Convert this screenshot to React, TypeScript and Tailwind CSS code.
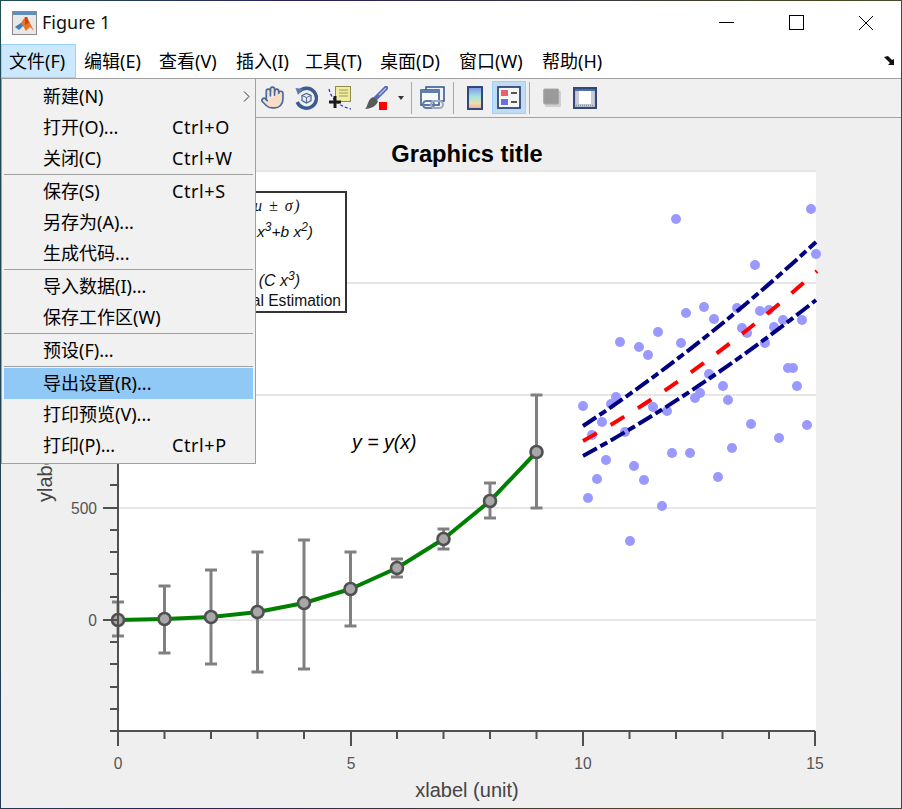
import { Hand } from "lucide-react";

const uiFont = "font-['Noto_Sans','Noto_Sans_CJK_SC',sans-serif]";

const menuBar = [
  { label: "文件(F)", cls: "w-[75px] pl-[7px] bg-[#cce8ff] border border-[#99d1ff]" },
  { label: "编辑(E)", cls: "w-[75px] pl-[8px]" },
  { label: "查看(V)", cls: "w-[77px] pl-[8px]" },
  { label: "插入(I)", cls: "w-[69px] pl-[8px]" },
  { label: "工具(T)", cls: "w-[75px] pl-[8px]" },
  { label: "桌面(D)", cls: "w-[79px] pl-[8px]" },
  { label: "窗口(W)", cls: "w-[83px] pl-[8px]" },
  { label: "帮助(H)", cls: "w-[80px] pl-[8px]" },
];

type MenuRow = { label?: string; keys?: string; sub?: boolean; active?: boolean; sep?: boolean };

const fileMenu: MenuRow[] = [
  { label: "新建(N)", sub: true },
  { label: "打开(O)...", keys: "Ctrl+O" },
  { label: "关闭(C)", keys: "Ctrl+W" },
  { sep: true },
  { label: "保存(S)", keys: "Ctrl+S" },
  { label: "另存为(A)..." },
  { label: "生成代码..." },
  { sep: true },
  { label: "导入数据(I)..." },
  { label: "保存工作区(W)" },
  { sep: true },
  { label: "预设(F)..." },
  { sep: true },
  { label: "导出设置(R)...", active: true },
  { label: "打印预览(V)..." },
  { label: "打印(P)...", keys: "Ctrl+P" },
];

const xPos = [118, 164.5, 211, 257.5, 304, 350.5, 397, 443.5, 490, 536.5];
const yPos = [620, 619, 617, 612, 603, 589, 568, 539, 501, 452];
const errs = [
  [602, 636], [586, 653], [570, 664], [552, 672], [540, 669],
  [552, 626], [559, 577], [529, 549], [483, 518], [395, 508],
];

const scatter = [
  [676, 219], [811, 209], [816, 254], [755, 265], [620, 342], [639, 347], [648, 355], [658, 332],
  [686, 313], [704, 307], [714, 319], [681, 343], [737, 308], [760, 311], [769, 310], [742, 328],
  [747, 333], [783, 320], [774, 327], [802, 320], [765, 343], [788, 368], [793, 368], [797, 386],
  [709, 374], [723, 386], [583, 406], [616, 397], [611, 404], [602, 422], [592, 435], [625, 432],
  [653, 407], [667, 411], [695, 398], [700, 393], [728, 400], [751, 424], [779, 438], [807, 425],
  [732, 448], [672, 453], [690, 453], [606, 460], [634, 466], [597, 479], [644, 480], [718, 477],
  [588, 498], [662, 506], [630, 541],
];

const yMinor = [485, 530, 552, 574, 597, 642, 664, 687, 709];
const xMinor = [164.5, 211, 257.5, 304, 397, 443.5, 490, 536.5, 629.5, 676, 722.5, 769];

const MatlabIcon = () => (
  <svg width="25" height="24" viewBox="0 0 25 24">
    <rect x="0.5" y="0.5" width="24" height="23" fill="#e8e8e8" stroke="#8a8a8a" />
    <rect x="1" y="1" width="23" height="3" fill="#5f8fc0" />
    <path d="M3 16 L9 12 L13 6 L15 6 L22 20 L18 16 L14 20 L11 15 Z" fill="#e8762a" />
    <path d="M3 16 L9 12 L11 15 L7 19 Z" fill="#3f80c4" />
    <path d="M13 6 L15 6 L17 12 L13 14 Z" fill="#c8451c" />
  </svg>
);

const RotateIcon = () => (
  <svg width="24" height="24" viewBox="0 0 24 24">
    <path d="M5 5.5 A10 10 0 1 1 3.2 16" fill="none" stroke="#3c5b8e" strokeWidth="3.4" />
    <path d="M1.5 2 L9 3 L4 9 Z" fill="#5f7aa6" />
    <path d="M8 9.5 L12.5 7.5 L17 9.5 L17 14.5 L12.5 17 L8 14.5 Z" fill="#e9edf3" stroke="#4f6a97" strokeWidth="1.3" />
    <path d="M8 9.5 L12.5 11.5 L17 9.5 M12.5 11.5 L12.5 17" fill="none" stroke="#4f6a97" strokeWidth="1" />
  </svg>
);

const CursorIcon = () => (
  <svg width="24" height="24" viewBox="0 0 24 24">
    <path d="M1 3 C3 12 10 20 23 23" fill="none" stroke="#2430e0" strokeWidth="1.2" strokeDasharray="3 2" />
    <rect x="7.5" y="0.5" width="15" height="15" fill="#f1eba0" stroke="#8d8d4a" />
    <path d="M11 4 H20 M11 7 H20 M11 10 H20" stroke="#9a9a66" strokeWidth="1" />
    <path d="M7 10 V22 M1 16 H13" stroke="#1a1a1a" strokeWidth="3" />
  </svg>
);

const BrushIcon = () => (
  <svg width="24" height="24" viewBox="0 0 24 24">
    <path d="M22 2 L11 13" stroke="#5668b8" strokeWidth="4.5" strokeLinecap="round" />
    <path d="M22 2 L15 9" stroke="#b9c4ea" strokeWidth="1.2" />
    <path d="M9 11 L14 15 C13 20 6 23 1 23 C4 21 3 14 9 11 Z" fill="#5a5a5a" />
    <rect x="15" y="16" width="8" height="8" fill="#ff0000" />
  </svg>
);

const LinkIcon = () => (
  <svg width="25" height="24" viewBox="0 0 25 24">
    <rect x="6" y="1" width="18" height="14" fill="#eef1f6" stroke="#3c5b8e" strokeWidth="1.6" />
    <rect x="1" y="4" width="18" height="15" fill="#f8fafc" stroke="#3c5b8e" strokeWidth="1.6" />
    <rect x="1" y="4" width="18" height="3" fill="#5f7fae" />
    <rect x="3" y="15" width="11" height="7" rx="3.5" fill="none" stroke="#5f7aa6" strokeWidth="2" />
    <rect x="11" y="15" width="12" height="7" rx="3.5" fill="none" stroke="#9aa9c4" strokeWidth="2" />
  </svg>
);

const ColorbarIcon = () => (
  <svg width="16" height="24" viewBox="0 0 16 24">
    <defs>
      <linearGradient id="cbar" x1="0" y1="0" x2="0" y2="1">
        <stop offset="0" stopColor="#7f95e8" />
        <stop offset="0.45" stopColor="#a4e6dc" />
        <stop offset="0.75" stopColor="#ecdca8" />
        <stop offset="1" stopColor="#f0a8a0" />
      </linearGradient>
    </defs>
    <rect x="1" y="1" width="14" height="22" fill="url(#cbar)" stroke="#33477a" strokeWidth="2" />
  </svg>
);

const LegendIcon = () => (
  <svg width="24" height="23" viewBox="0 0 24 23">
    <rect x="1" y="1" width="22" height="21" fill="#f6f6f6" stroke="#33477a" strokeWidth="1.8" />
    <rect x="4" y="4" width="7" height="6" fill="#e8606a" />
    <rect x="4" y="13" width="7" height="6" fill="#6a70e0" />
    <path d="M14 7 H20 M14 16 H20" stroke="#222" strokeWidth="1.6" />
  </svg>
);

const GrayIcon = () => (
  <svg width="18" height="19" viewBox="0 0 18 19">
    <rect x="2" y="3" width="16" height="16" rx="1" fill="#d0d0d0" />
    <rect x="0.7" y="1" width="15" height="15" rx="1" fill="#9a9a9a" stroke="#a8a8a8" />
  </svg>
);

const FrameIcon = () => (
  <svg width="24" height="22" viewBox="0 0 24 22">
    <rect x="1" y="1" width="22" height="20" fill="#c8ccd6" stroke="#33477a" strokeWidth="2.2" />
    <rect x="2" y="2" width="20" height="2" fill="#4f6fa0" />
    <rect x="6" y="4" width="12" height="13" fill="#ffffff" />
    <path d="M3 18.5 H21" stroke="#8a94aa" strokeWidth="1.4" strokeDasharray="1 1" />
  </svg>
);

const ToolSep = ({ cls }: { cls: string }) => <div className={`w-px h-[32px] bg-[#a8a8a8] ${cls}`} />;

export default function App() {
  return (
    <div className="relative w-[902px] h-[809px] p-px bg-[linear-gradient(100deg,#1f4f55,#2a1f5a_30%,#4a4a20_80%,#3a4a50)] overflow-hidden">
      <div className={`flex flex-col w-[900px] h-[807px] bg-[#efefef] text-black ${uiFont}`}>
        {/* title bar */}
        <div className="flex items-center h-[43px] bg-white shrink-0">
          <div className="ml-[11px] mt-[1px]">
            <MatlabIcon />
          </div>
          <span className="ml-[5px] text-[18px] text-[#111]">Figure 1</span>
          <div className="ml-auto flex h-full">
            <div className="w-[70px] flex items-center justify-center">
              <div className="w-[15px] h-px bg-black" />
            </div>
            <div className="w-[70px] flex items-center justify-center">
              <div className="w-[15px] h-[15px] border border-black" />
            </div>
            <div className="w-[70px] flex items-center justify-center">
              <svg width="16" height="16" viewBox="0 0 16 16">
                <path d="M1 1 L15 15 M15 1 L1 15" stroke="#000" strokeWidth="1" />
              </svg>
            </div>
          </div>
        </div>

        {/* menu bar */}
        <div className="flex items-stretch h-[35px] bg-white border-b border-[#a0a0a0] shrink-0 text-[18px]">
          {menuBar.map((m) => (
            <div key={m.label} className={`flex items-center whitespace-nowrap ${m.cls}`}>
              {m.label}
            </div>
          ))}
          <div className="ml-auto mr-[6px] flex items-center">
            <svg width="11" height="10" viewBox="0 0 11 10">
              <path d="M0 1 L4 0 L8 4 L10 3 L10 9 L4 9 L6 7 Z" fill="#111" />
            </svg>
          </div>
        </div>

        {/* toolbar */}
        <div className="flex items-center h-[39px] pl-[259px] pb-px bg-[#f0f0f0] border-b border-[#a0a0a0] shrink-0">
          <Hand size={25} strokeWidth={1.6} color="#45699c" fill="#fbdcc6" />
          <div className="ml-[9px]">
            <RotateIcon />
          </div>
          <div className="ml-[10px]">
            <CursorIcon />
          </div>
          <div className="ml-[12px]">
            <BrushIcon />
          </div>
          <div className="ml-[10px] w-0 h-0 border-x-[3px] border-x-transparent border-t-[4px] border-t-[#333]" />
          <ToolSep cls="ml-[7px]" />
          <div className="ml-[8px]">
            <LinkIcon />
          </div>
          <ToolSep cls="ml-[8px]" />
          <div className="ml-[13px]">
            <ColorbarIcon />
          </div>
          <div className="ml-[9px] w-[34px] h-[33px] flex items-center justify-center bg-[#bfdcf5] border border-[#99d1ff]">
            <LegendIcon />
          </div>
          <ToolSep cls="ml-[3px]" />
          <div className="ml-[13px]">
            <GrayIcon />
          </div>
          <div className="ml-[12px]">
            <FrameIcon />
          </div>
        </div>

        {/* figure */}
        <svg width="900" height="690" viewBox="1 118 900 690" className="block shrink-0">
          <rect x="118" y="171" width="698" height="560" fill="#ffffff" />
          {[171, 283, 395, 508, 620].map((y) => (
            <line key={y} x1="118" x2="816" y1={y} y2={y} stroke="#e6e6e6" strokeWidth="2" />
          ))}

          {scatter.map(([cx, cy], i) => (
            <circle key={i} cx={cx} cy={cy} r="5" fill="#9999ff" />
          ))}

          <g fill="none" strokeWidth="4">
            <path d="M583 426 Q700 349 816 242" stroke="#000080" strokeDasharray="16 4 8 4" />
            <path d="M583 441 Q700 375.5 817 271" stroke="#ff0000" strokeDasharray="16 16" />
            <path d="M583 456 Q700 392 816 300" stroke="#000080" strokeDasharray="16 4 8 4" />
          </g>

          {xPos.map((x, i) => (
            <g key={x} stroke="#808080" strokeWidth="3">
              <line x1={x} x2={x} y1={errs[i][0]} y2={errs[i][1]} />
              <line x1={x - 6} x2={x + 6} y1={errs[i][0]} y2={errs[i][0]} />
              <line x1={x - 6} x2={x + 6} y1={errs[i][1]} y2={errs[i][1]} />
            </g>
          ))}
          <polyline
            points={xPos.map((x, i) => `${x},${yPos[i]}`).join(" ")}
            fill="none"
            stroke="#008000"
            strokeWidth="4"
            strokeLinejoin="round"
          />
          {xPos.map((x, i) => (
            <circle key={x} cx={x} cy={yPos[i]} r="6" fill="#a8a8a8" stroke="#505050" strokeWidth="2.6" />
          ))}

          {/* axes */}
          <g stroke="#505050" strokeWidth="2">
            <line x1="118" x2="118" y1="171" y2="746" />
            <line x1="110" x2="815" y1="731" y2="731" />
            <line x1="103" x2="118" y1="620" y2="620" />
            <line x1="103" x2="118" y1="508" y2="508" />
            {yMinor.map((y) => (
              <line key={y} x1="110" x2="118" y1={y} y2={y} />
            ))}
            {xMinor.map((x) => (
              <line key={x} x1={x} x2={x} y1="731" y2="739" />
            ))}
            <line x1="351" x2="351" y1="731" y2="746" />
            <line x1="583" x2="583" y1="731" y2="746" />
            <line x1="815" x2="815" y1="731" y2="746" />
          </g>

          <g fontFamily="'Liberation Sans', sans-serif">
            <text x="467" y="162" textAnchor="middle" fontSize="23.7" fontWeight="700" fill="#000">
              Graphics title
            </text>
            <g fontSize="15.6" fill="#555555">
              <text x="97" y="514" textAnchor="end">500</text>
              <text x="97" y="626" textAnchor="end">0</text>
              <text x="118" y="769" textAnchor="middle">0</text>
              <text x="351" y="769" textAnchor="middle">5</text>
              <text x="583" y="769" textAnchor="middle">10</text>
              <text x="815" y="769" textAnchor="middle">15</text>
            </g>
            <text x="467" y="797" textAnchor="middle" fontSize="20" fill="#444444">
              xlabel (unit)
            </text>
            <text x="0" y="0" transform="translate(52 502) rotate(-90)" fontSize="20" fill="#444444">
              ylabel (unit)
            </text>
            <text x="352" y="449" fontSize="19.5" fontStyle="italic" fill="#000">
              y = y(x)
            </text>

            {/* legend */}
            <rect x="125" y="192" width="221" height="120" fill="#ffffff" stroke="#333333" strokeWidth="2" />
            <text x="301" y="211" textAnchor="end" fontSize="16" letterSpacing="1.5" fontFamily="'Liberation Serif', serif" fontStyle="italic" fill="#111">
              μ ± σ)
            </text>
            <text x="313" y="237" textAnchor="end" fontSize="15.5" fontStyle="italic" fill="#111">
              a x
              <tspan dy="-6" fontSize="12">3</tspan>
              <tspan dy="6">+b x</tspan>
              <tspan dy="-6" fontSize="12">2</tspan>
              <tspan dy="6">)</tspan>
            </text>
            <text x="300" y="286" textAnchor="end" fontSize="16" fontStyle="italic" fill="#111">
              (C x
              <tspan dy="-6" fontSize="12">3</tspan>
              <tspan dy="6">)</tspan>
            </text>
            <text x="341" y="306" textAnchor="end" fontSize="15.6" fill="#111">
              Optimal Estimation
            </text>
          </g>
        </svg>
      </div>

      {/* open file menu */}
      <div className={`absolute top-[78px] left-[1px] w-[255px] h-[386px] pt-[2px] bg-[#f1f1f1] border border-[#a0a0a0] text-[18px] text-black ${uiFont}`}>
        {fileMenu.map((row, i) =>
          row.sep ? (
            <div key={i} className="h-[2px] mx-[2px] border-t border-[#a0a0a0]" />
          ) : (
            <div
              key={i}
              className={`relative flex items-center h-[31px] mx-[2px] pl-[39px] whitespace-nowrap ${row.active ? "bg-[#90c8f6]" : ""}`}
            >
              <span>{row.label}</span>
              {row.keys && <span className="absolute left-[168px] tracking-[0.6px]">{row.keys}</span>}
              {row.sub && (
                <svg width="7" height="11" viewBox="0 0 7 11" className="absolute left-[239px]">
                  <path d="M1 0.5 L6 5.5 L1 10.5" fill="none" stroke="#333" strokeWidth="1" />
                </svg>
              )}
            </div>
          )
        )}
      </div>
    </div>
  );
}
